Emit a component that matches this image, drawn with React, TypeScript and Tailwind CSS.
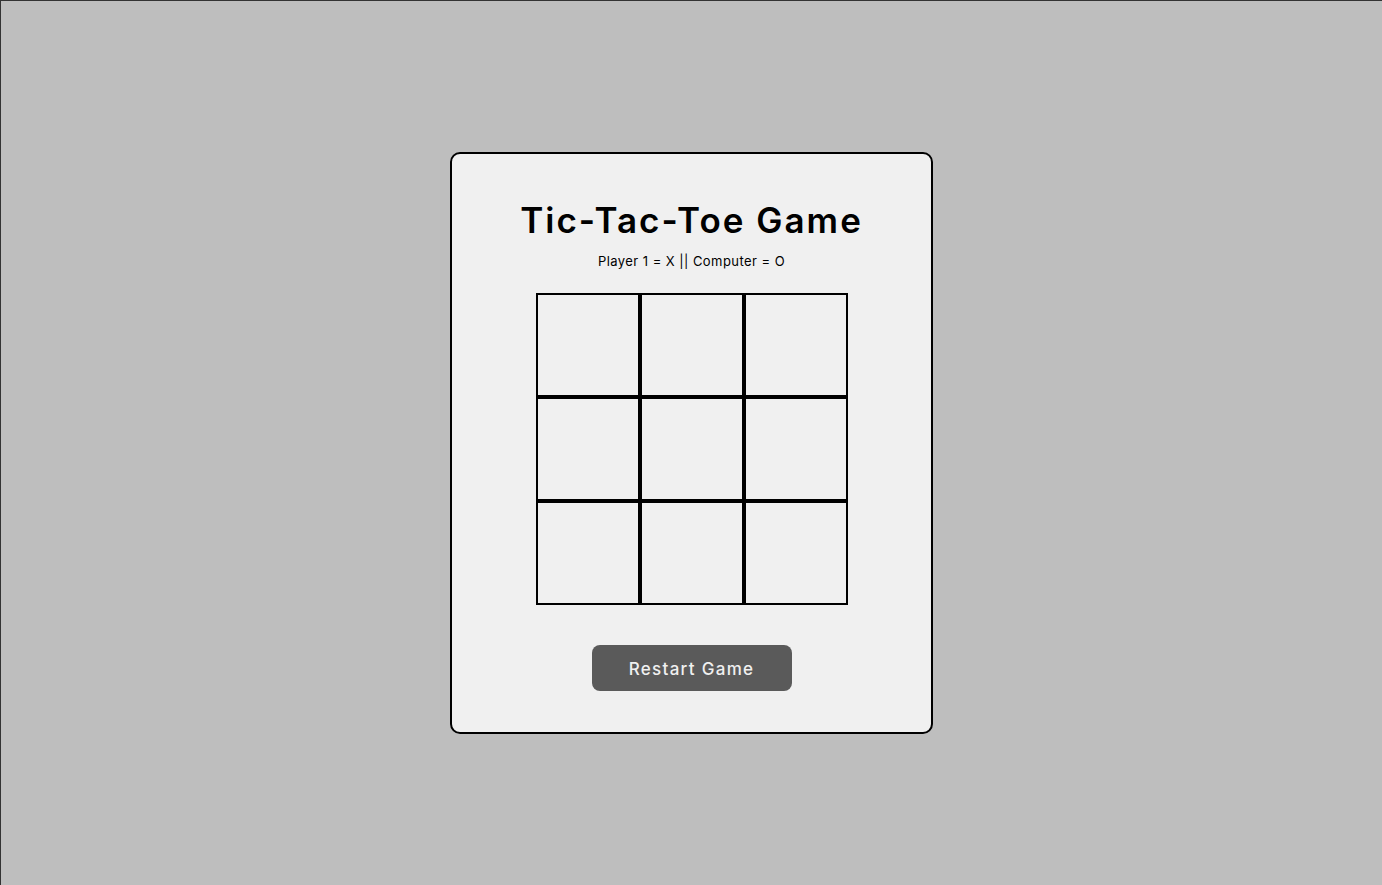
import { useState } from 'react';

type Cell = 'X' | 'O' | null;

export default function App() {
  const [board, setBoard] = useState<Cell[]>(Array(9).fill(null));

  const play = (i: number) => {
    if (board[i]) return;
    const next = [...board];
    next[i] = 'X';
    const free = next.map((c, idx) => (c ? -1 : idx)).filter((idx) => idx >= 0);
    if (free.length) next[free[Math.floor(Math.random() * free.length)]] = 'O';
    setBoard(next);
  };

  return (
    <div
      className="w-screen h-screen border-t border-l border-[#333] bg-[#bebebe] flex items-center justify-center"
      style={{ fontFamily: 'Inter, "Noto Sans", sans-serif' }}
    >
      {/* Card */}
      <div className="w-[483px] bg-[#f0f0f0] border-2 border-black rounded-[10px] flex flex-col items-center pt-[45px] pb-[41px]">
        <h1 className="text-[35px] leading-[42px] font-semibold text-black tracking-[2px]">
          Tic-Tac-Toe Game
        </h1>
        <p className="mt-[10px] text-[13px] leading-[20px] text-black tracking-[0.45px]">
          Player 1 = X || Computer = O
        </p>

        {/* Board */}
        <div className="mt-[22px] grid grid-cols-[repeat(3,104px)] grid-rows-[repeat(3,104px)]">
          {board.map((cell, i) => (
            <button
              key={i}
              onClick={() => play(i)}
              className="border-2 border-black flex items-center justify-center text-5xl font-semibold text-black"
            >
              {cell}
            </button>
          ))}
        </div>

        <button
          onClick={() => setBoard(Array(9).fill(null))}
          className="mt-[40px] w-[200px] h-[46px] pt-[3px] rounded-lg bg-[#5a5a5a] text-[#f0f0f0] text-[17px] font-medium tracking-[1.3px]"
        >
          Restart Game
        </button>
      </div>
    </div>
  );
}
